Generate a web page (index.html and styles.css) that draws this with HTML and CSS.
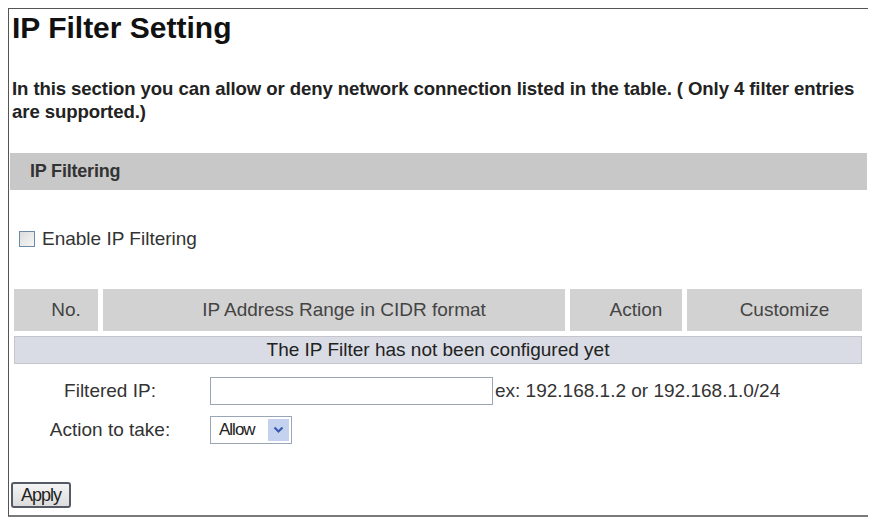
FILE: index.html
```html
<!DOCTYPE html>
<html>
<head>
<meta charset="utf-8">
<link rel="stylesheet" href="styles.css">
</head>
<body>
<div class="frame">
  <h1 class="title">IP Filter Setting</h1>
  <p class="intro">In this section you can allow or deny network connection listed in the table. ( Only 4 filter entries are supported.)</p>
  <div class="bar">IP Filtering</div>
  <label class="enable"><span class="check"></span>Enable IP Filtering</label>
  <div class="grid">
    <div class="th">No.</div>
    <div class="th">IP Address Range in CIDR format</div>
    <div class="th">Action</div>
    <div class="th">Customize</div>
    <div class="empty">The IP Filter has not been configured yet</div>
  </div>
  <div class="form">
    <div class="row">
      <div class="lbl">Filtered IP:</div>
      <div class="input"></div>
      <div class="hint">ex: 192.168.1.2 or 192.168.1.0/24</div>
    </div>
    <div class="row">
      <div class="lbl">Action to take:</div>
      <div class="select"><span class="sel-text">Allow</span><span class="sel-btn"><svg width="11" height="8" viewBox="0 0 11 8"><path d="M1.5 1.5 L5.5 5.5 L9.5 1.5" fill="none" stroke="#3a5cb0" stroke-width="2.2"/></svg></span></div>
    </div>
  </div>
  <div class="apply">Apply</div>
</div>
</body>
</html>
```

FILE: styles.css
```css
* { box-sizing: border-box; }
html, body { background: #fff; }
body {
  margin: 8px;
  font-family: "Liberation Sans", Arial, sans-serif;
  color: #222;
}
.frame {
  width: 864px;
  height: 509px;
  border-top: 1px solid #555;
  border-left: 1px solid #555;
  border-right: 2px solid #7a7a7a;
  border-bottom: 2px solid #7a7a7a;
  padding: 0 3px 0 1px;
  display: flex;
  flex-direction: column;
}
.title {
  margin: 3px 0 0 2px;
  font-size: 30px;
  line-height: 32px;
  font-weight: bold;
  color: #111;
}
.intro {
  margin: 33px 0 0 2px;
  font-size: 18.6px;
  line-height: 23px;
  font-weight: bold;
  color: #222;
  letter-spacing: -0.1px;
}
.bar {
  margin-top: 30px;
  height: 37px;
  background: #c8c8c8;
  font-size: 18px;
  font-weight: bold;
  color: #333;
  line-height: 37px;
  padding-left: 20px;
  letter-spacing: -0.2px;
}
.enable {
  margin: 40px 0 0 9px;
  display: flex;
  align-items: center;
  font-size: 19px;
  color: #333;
  height: 18px;
}
.check {
  width: 16px;
  height: 16px;
  border: 1px solid #6a8aa8;
  background: linear-gradient(135deg, #dcdcdc, #f6f6f6);
  margin-right: 7px;
}
.grid {
  margin: 41px 0 0 4px;
  display: grid;
  grid-template-columns: 84px 462px 112px 175px;
  column-gap: 5px;
  row-gap: 5px;
  width: 853px;
}
.th {
  height: 42px;
  background: #d2d2d2;
  color: #444;
  font-size: 19px;
  line-height: 42px;
  text-align: center;
  padding-left: 20px;
}
.empty {
  grid-column: 1 / 5;
  height: 28px;
  background: #d9dce4;
  color: #222;
  font-size: 19px;
  line-height: 26px;
  text-align: center;
  border: 1px solid #c4c6cc;
}
.form {
  margin-top: 13px;
  display: flex;
  flex-direction: column;
  gap: 11px;
}
.row {
  display: flex;
  align-items: center;
  height: 28px;
}
.lbl {
  width: 200px;
  text-align: center;
  font-size: 19px;
  color: #333;
}
.input {
  width: 283px;
  height: 28px;
  border: 1px solid #9aa6b6;
  background: #fff;
}
.hint {
  margin-left: 2px;
  font-size: 19px;
  color: #333;
}
.select {
  width: 82px;
  height: 28px;
  border: 1px solid #9aa6b6;
  display: flex;
  align-items: stretch;
  padding: 2px;
}
.sel-text {
  flex: 1;
  font-size: 17px;
  color: #222;
  line-height: 22px;
  padding-left: 6px;
  letter-spacing: -1px;
}
.sel-btn {
  width: 21px;
  background: #c4d2f0;
  display: flex;
  align-items: center;
  justify-content: center;
}
.apply {
  margin: 38px 0 0 1px;
  width: 60px;
  height: 26px;
  border: 2px solid #555a66;
  border-radius: 3px;
  background: linear-gradient(#f4f4f4, #dcdcdc);
  font-size: 18px;
  line-height: 22px;
  text-align: center;
  color: #222;
  letter-spacing: -1px;
}
```
